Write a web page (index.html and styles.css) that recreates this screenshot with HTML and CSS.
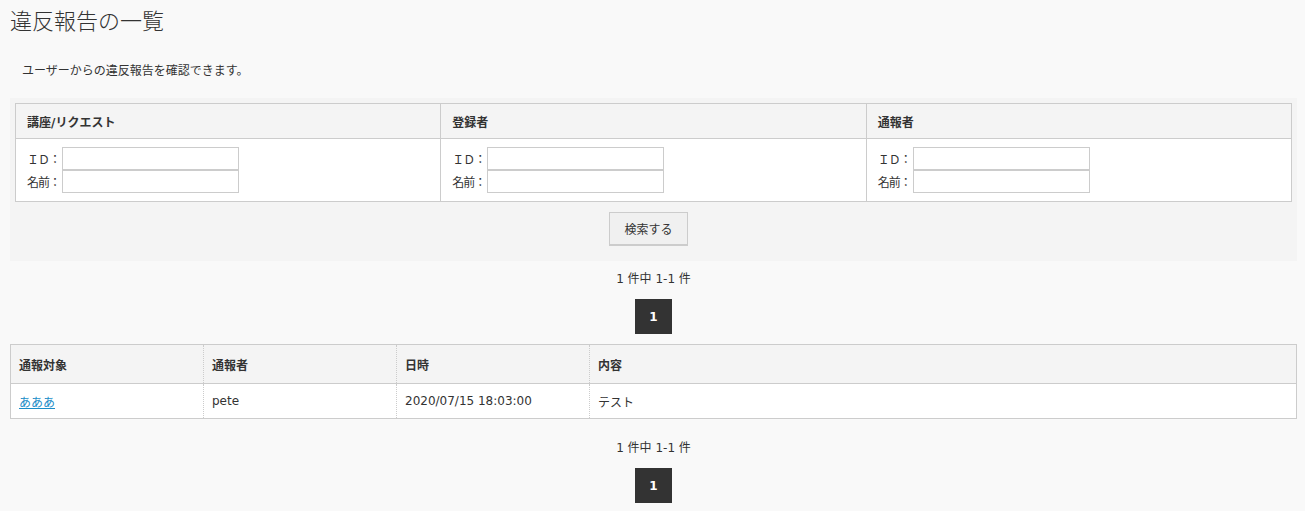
FILE: index.html
```html
<!DOCTYPE html>
<html lang="ja">
<head>
<meta charset="utf-8">
<link rel="stylesheet" href="styles.css">
</head>
<body>
<div class="page">
  <h1 class="title">違反報告の一覧</h1>
  <p class="desc">ユーザーからの違反報告を確認できます。</p>
  <div class="search">
    <table class="search-table">
      <thead>
        <tr><th>講座/リクエスト</th><th>登録者</th><th>通報者</th></tr>
      </thead>
      <tbody>
        <tr>
          <td>
            <div class="field"><span class="lbl">ＩＤ：</span><input class="inp" type="text"></div>
            <div class="field"><span class="lbl">名前：</span><input class="inp" type="text"></div>
          </td>
          <td>
            <div class="field"><span class="lbl">ＩＤ：</span><input class="inp" type="text"></div>
            <div class="field"><span class="lbl">名前：</span><input class="inp" type="text"></div>
          </td>
          <td>
            <div class="field"><span class="lbl">ＩＤ：</span><input class="inp" type="text"></div>
            <div class="field"><span class="lbl">名前：</span><input class="inp" type="text"></div>
          </td>
        </tr>
      </tbody>
    </table>
    <div class="btn-row"><button class="btn">検索する</button></div>
  </div>
  <div class="count">1 件中 1-1 件</div>
  <div class="pager"><span class="page-num">1</span></div>
  <table class="result">
    <thead>
      <tr><th class="c1">通報対象</th><th class="c2">通報者</th><th class="c3">日時</th><th>内容</th></tr>
    </thead>
    <tbody>
      <tr><td><a href="#" class="link">あああ</a></td><td>pete</td><td>2020/07/15 18:03:00</td><td>テスト</td></tr>
    </tbody>
  </table>
  <div class="count count-bottom">1 件中 1-1 件</div>
  <div class="pager"><span class="page-num">1</span></div>
</div>
</body>
</html>
```
FILE: styles.css
```css
html, body {
  margin: 0;
  padding: 0;
  background: #f9f9f9;
}
body {
  font-family: "DejaVu Sans", "Noto Sans CJK JP", sans-serif;
  font-size: 12px;
  color: #333;
}
.page {
  padding: 0 8px 0 10px;
}
.title {
  margin: 0;
  padding-top: 4px;
  font-family: "Noto Sans CJK JP", sans-serif;
  font-size: 22px;
  font-weight: 300;
  line-height: 30px;
  color: #333;
}
.desc {
  margin: 0;
  padding: 28px 0 0 12px;
  line-height: 18px;
  height: 36px;
}
.search {
  background: #f4f4f4;
  padding: 5px 5px 15px 5px;
}
.search-table {
  width: 100%;
  border-collapse: collapse;
  table-layout: fixed;
}
.search-table th {
  background: #f4f4f4;
  border: 1px solid #ccc;
  text-align: left;
  font-weight: bold;
  padding: 0 11px;
  height: 34px;
}
.search-table td {
  background: #fff;
  border: 1px solid #ccc;
  padding: 8px 11px 8px 11px;
  vertical-align: top;
}
.field {
  display: flex;
  align-items: center;
  height: 23px;
}
.lbl {
  flex: none;
  white-space: nowrap;
  width: 35px;
  line-height: 18px;
  letter-spacing: -1px;
  font-family: "Noto Sans CJK JP", sans-serif;
}
.inp {
  flex: none;
  box-sizing: border-box;
  width: 177px;
  height: 23px;
  border: 1px solid #ccc;
  background: #fff;
  margin: 0;
  padding: 2px 4px;
  font-family: inherit;
  font-size: 12px;
}
.btn-row {
  display: flex;
  justify-content: center;
  padding-top: 10px;
}
.btn {
  box-sizing: border-box;
  width: 79px;
  height: 34px;
  margin-right: 10px;
  background: #f0f0f0;
  border: 1px solid #ccc;
  border-bottom-width: 2px;
  font-family: "Noto Sans CJK JP", sans-serif;
  font-size: 12px;
  color: #333;
  padding: 0;
}
.count {
  text-align: center;
  line-height: 18px;
  padding-top: 9px;
}
.count-bottom {
  padding-top: 20px;
}
.pager {
  display: flex;
  justify-content: center;
  padding-top: 11px;
  padding-bottom: 10px;
}
.page-num {
  display: flex;
  align-items: center;
  justify-content: center;
  width: 37px;
  height: 35px;
  background: #333;
  color: #fff;
  font-weight: bold;
}
.result {
  width: 100%;
  border-collapse: collapse;
  table-layout: fixed;
  background: #fff;
  border: 1px solid #ccc;
}
.result th {
  background: #f4f4f4;
  height: 38px;
  text-align: left;
  font-weight: bold;
  padding: 0 8px;
  border-bottom: 1px solid #ccc;
  border-left: 1px dotted #ccc;
}
.result td {
  height: 34px;
  padding: 0 8px;
  border-left: 1px dotted #ccc;
}
.result th:first-child, .result td:first-child {
  border-left: 1px solid #ccc;
}
.c1, .c2, .c3 {
  width: 176px;
}
.link {
  color: #1a8cc8;
  text-decoration: underline;
}
```
